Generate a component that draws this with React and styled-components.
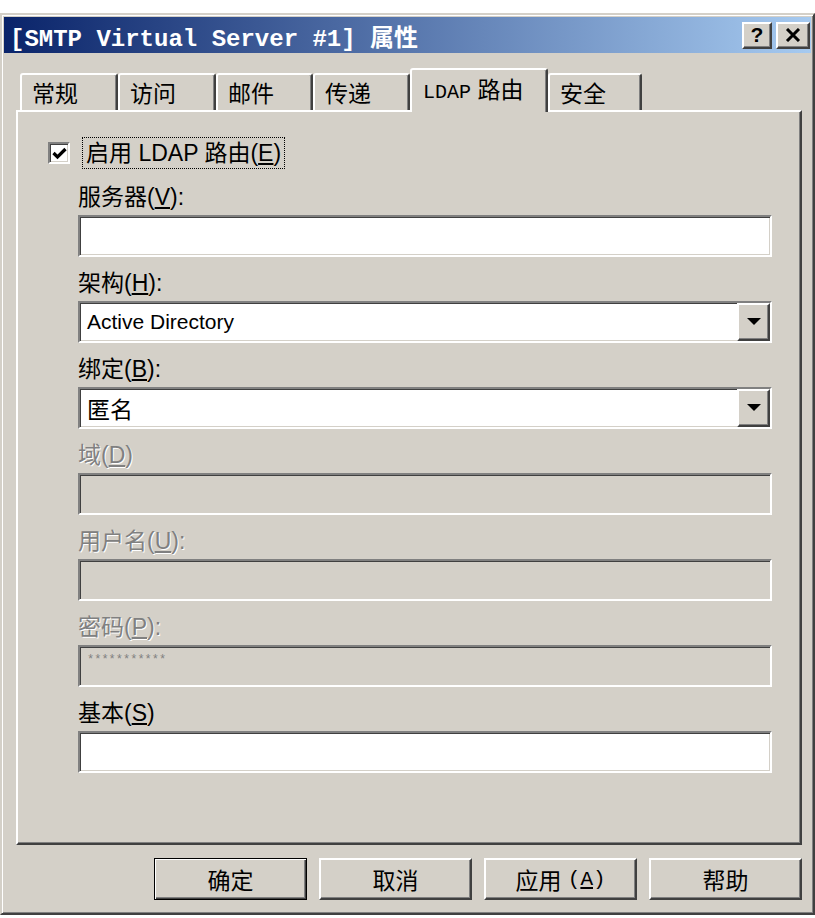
import React from "react";
import styled, { createGlobalStyle, css } from "styled-components";

const face = "#d4d0c8";

const GlobalStyle = createGlobalStyle`
  html, body {
    margin: 0;
    padding: 0;
    background: #ffffff;
    overflow: hidden;
  }
  body {
    font-family: "Liberation Sans", "Noto Sans CJK SC", sans-serif;
    color: #000;
  }
`;

const raised = css`
  border-style: solid;
  border-width: 2px;
  border-color: #ffffff #404040 #404040 #ffffff;
  box-shadow: inset -1px -1px #808080;
`;

const sunken = css`
  border-style: solid;
  border-width: 2px;
  border-color: #808080 #ffffff #ffffff #808080;
  box-shadow: inset 1px 1px #404040, inset -1px -1px ${face};
`;

const Window = styled.div`
  box-sizing: border-box;
  margin-top: 13px;
  width: 815px;
  height: 902px;
  padding: 2px;
  background: ${face};
  border: 2px solid;
  border-color: ${face} #404040 #404040 ${face};
  box-shadow: inset 1px 1px #ffffff, inset -1px -1px #808080;
  display: flex;
  flex-direction: column;
`;

const TitleBar = styled.div`
  height: 36px;
  flex-shrink: 0;
  display: flex;
  align-items: center;
  justify-content: space-between;
  padding: 0 1px 0 6px;
  background: linear-gradient(to right, #0a246a 0%, #a6caf0 100%);
`;

const TitleText = styled.div`
  font-family: "Liberation Mono", "Noto Sans CJK SC", monospace;
  font-weight: bold;
  font-size: 24px;
  color: #ffffff;
  white-space: pre;
`;

const Controls = styled.div`
  display: flex;
  gap: 4px;
`;

const CtrlButton = styled.div`
  box-sizing: border-box;
  width: ${(p) => p.$w}px;
  height: 27px;
  background: ${face};
  ${raised};
  display: flex;
  align-items: center;
  justify-content: center;
  font-weight: bold;
  font-size: 21px;
`;

const Body = styled.div`
  flex: 1;
  display: flex;
  flex-direction: column;
  padding: 15px 9px 0 12px;
`;

const TabStrip = styled.div`
  height: 42px;
  display: flex;
  align-items: flex-end;
  padding-left: 4px;
`;

const Tab = styled.div`
  box-sizing: border-box;
  width: ${(p) => p.$w}px;
  height: ${(p) => (p.$active ? 44 : 37)}px;
  margin-bottom: ${(p) => (p.$active ? -2 : 0)}px;
  position: relative;
  z-index: ${(p) => (p.$active ? 2 : 0)};
  background: ${face};
  border: 2px solid;
  border-bottom: none;
  border-color: #ffffff #404040 transparent #ffffff;
  border-radius: 3px 3px 0 0;
  box-shadow: inset -1px 0 #808080;
  padding: ${(p) => (p.$active ? "5px 0 0 11px" : "4px 0 0 10px")};
  font-size: 23px;
  line-height: 30px;
  white-space: nowrap;
`;

const Mono = styled.span`
  font-family: "Liberation Mono", monospace;
  font-size: ${(p) => p.$size || 20}px;
`;

const Panel = styled.div`
  box-sizing: border-box;
  height: 735px;
  ${raised};
  padding: 25px 28px 0 30px;
  display: flex;
  flex-direction: column;
`;

const CheckRow = styled.div`
  display: flex;
  align-items: center;
  gap: 12px;
  height: 32px;
`;

const CheckBox = styled.div`
  box-sizing: border-box;
  width: 22px;
  height: 22px;
  background: #ffffff;
  ${sunken};
  display: flex;
  align-items: center;
  justify-content: center;
`;

const FocusLabel = styled.div`
  border: 1px dotted #000;
  padding: 0 3px;
  font-size: 23px;
  line-height: 30px;
`;

const Fields = styled.div`
  display: flex;
  flex-direction: column;
  gap: 12px;
  margin-top: 14px;
  padding-left: 30px;
`;

const Field = styled.div`
  display: flex;
  flex-direction: column;
  gap: 4px;
`;

const Label = styled.div`
  font-size: 23px;
  line-height: 28px;
  height: 28px;
  color: ${(p) => (p.$disabled ? "#808080" : "#000")};
  text-shadow: ${(p) => (p.$disabled ? "1px 1px 0 #ffffff" : "none")};
`;

const TextBox = styled.div`
  box-sizing: border-box;
  height: 42px;
  ${sunken};
  background: ${(p) => (p.$disabled ? face : "#ffffff")};
  display: flex;
  align-items: ${(p) => (p.$top ? "flex-start" : "center")};
  padding: ${(p) => (p.$top ? "6px 0 0 7px" : "0 0 0 7px")};
  font-size: ${(p) => p.$size || 23}px;
`;

const ComboText = styled.div`
  flex: 1;
`;

const DropButton = styled.div`
  box-sizing: border-box;
  width: 33px;
  align-self: stretch;
  background: ${face};
  ${raised};
  display: flex;
  align-items: center;
  justify-content: center;
`;

const Stars = styled.span`
  font-family: "Liberation Mono", monospace;
  font-size: 12px;
  color: #808080;
`;

const ButtonRow = styled.div`
  display: flex;
  justify-content: flex-end;
  gap: 12px;
  margin-top: 13px;
`;

const Button = styled.div`
  box-sizing: border-box;
  width: 153px;
  height: 42px;
  background: ${face};
  display: flex;
  align-items: center;
  justify-content: center;
  font-size: 23px;
  ${(p) =>
    p.$default
      ? css`
          border: 1px solid #000;
          box-shadow: inset 1px 1px #ffffff, inset -1px -1px #404040,
            inset -2px -2px #808080;
        `
      : raised};
`;

const Triangle = () => (
  <svg width="14" height="8" viewBox="0 0 14 8">
    <polygon points="0,0 14,0 7,7" fill="#000" />
  </svg>
);

const tabs = [
  { label: "常规", w: 98 },
  { label: "访问", w: 98 },
  { label: "邮件", w: 97 },
  { label: "传递", w: 97 },
  { label: "LDAP", w: 138, active: true },
  { label: "安全", w: 94 },
];

const App = () => {
  return (
    <>
      <GlobalStyle />
      <Window>
        <TitleBar>
          <TitleText>[SMTP Virtual Server #1] 属性</TitleText>
          <Controls>
            <CtrlButton $w={30}>?</CtrlButton>
            <CtrlButton $w={34}>
              <svg width="16" height="14" viewBox="0 0 16 14">
                <path d="M2 1 L14 13 M14 1 L2 13" stroke="#000" strokeWidth="3" />
              </svg>
            </CtrlButton>
          </Controls>
        </TitleBar>

        <Body>
          <TabStrip>
            {tabs.map((t) =>
              t.active ? (
                <Tab key={t.label} $w={t.w} $active>
                  <Mono>LDAP</Mono> 路由
                </Tab>
              ) : (
                <Tab key={t.label} $w={t.w}>
                  {t.label}
                </Tab>
              )
            )}
          </TabStrip>

          <Panel>
            <CheckRow>
              <CheckBox>
                <svg width="15" height="13" viewBox="0 0 15 13">
                  <polyline
                    points="1.5,6 5.5,10 13.5,2"
                    fill="none"
                    stroke="#000"
                    strokeWidth="3.2"
                  />
                </svg>
              </CheckBox>
              <FocusLabel>
                启用 LDAP 路由(<u>E</u>)
              </FocusLabel>
            </CheckRow>

            <Fields>
              <Field>
                <Label>
                  服务器(<u>V</u>):
                </Label>
                <TextBox />
              </Field>
              <Field>
                <Label>
                  架构(<u>H</u>):
                </Label>
                <TextBox $size={21}>
                  <ComboText>Active Directory</ComboText>
                  <DropButton>
                    <Triangle />
                  </DropButton>
                </TextBox>
              </Field>
              <Field>
                <Label>
                  绑定(<u>B</u>):
                </Label>
                <TextBox>
                  <ComboText>匿名</ComboText>
                  <DropButton>
                    <Triangle />
                  </DropButton>
                </TextBox>
              </Field>
              <Field>
                <Label $disabled>
                  域(<u>D</u>)
                </Label>
                <TextBox $disabled />
              </Field>
              <Field>
                <Label $disabled>
                  用户名(<u>U</u>):
                </Label>
                <TextBox $disabled />
              </Field>
              <Field>
                <Label $disabled>
                  密码(<u>P</u>):
                </Label>
                <TextBox $disabled $top>
                  <Stars>***********</Stars>
                </TextBox>
              </Field>
              <Field>
                <Label>
                  基本(<u>S</u>)
                </Label>
                <TextBox />
              </Field>
            </Fields>
          </Panel>

          <ButtonRow>
            <Button $default>确定</Button>
            <Button>取消</Button>
            <Button>
              应用&nbsp;<Mono $size={21}>(<u>A</u>)</Mono>
            </Button>
            <Button>帮助</Button>
          </ButtonRow>
        </Body>
      </Window>
    </>
  );
};

export default App;
